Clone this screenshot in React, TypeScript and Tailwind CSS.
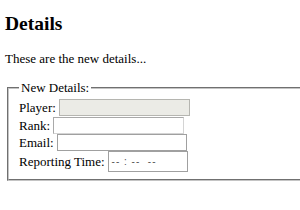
import React from "react";

export default function App() {
  return (
    <div className="w-[300px] h-[210px] overflow-hidden bg-white text-black pl-[5px] pt-[13px] text-[13px] font-['Liberation_Serif','Times_New_Roman',serif]">
      <h2 className="text-[19.5px] font-bold leading-[22px]">Details</h2>
      <p className="mt-[16px] leading-[15px]">These are the new details...</p>
      <fieldset className="mt-[14px] ml-[2px] w-[330px] border-2 [border-style:groove] border-[#c4c4c4] px-[10px] pt-[4px] pb-[7px]">
        <legend className="px-[2px] leading-[15px]">New Details:</legend>
        <div className="flex items-center gap-[3px] h-[17px] leading-[15px]">
          <span>Player:</span>
          <input
            disabled
            className="w-[131px] h-[17px] border border-[#b5b5b0] bg-[#ebebe6]"
          />
        </div>
        <div className="flex items-center gap-[3px] h-[17px] leading-[15px] mt-[1px]">
          <span>Rank:</span>
          <input className="w-[131px] h-[17px] border border-[#a9a9a9] border-r-[#d4d4d4] border-b-[#d4d4d4] bg-white" />
        </div>
        <div className="flex items-center gap-[3px] h-[17px] leading-[15px]">
          <span>Email:</span>
          <input className="w-[130px] h-[17px] border border-[#a0a0a0] bg-white" />
        </div>
        <div className="flex items-center gap-[3px] h-[21px] leading-[15px]">
          <span>Reporting Time:</span>
          <div className="w-[80px] h-[21px] border border-[#a0a0a0] bg-white flex items-center pl-[3px] text-[10px] text-[#555] tracking-[1px] font-['Liberation_Sans',Arial,sans-serif]">
            <span className="whitespace-pre">-- : --  --</span>
          </div>
        </div>
      </fieldset>
    </div>
  );
}
